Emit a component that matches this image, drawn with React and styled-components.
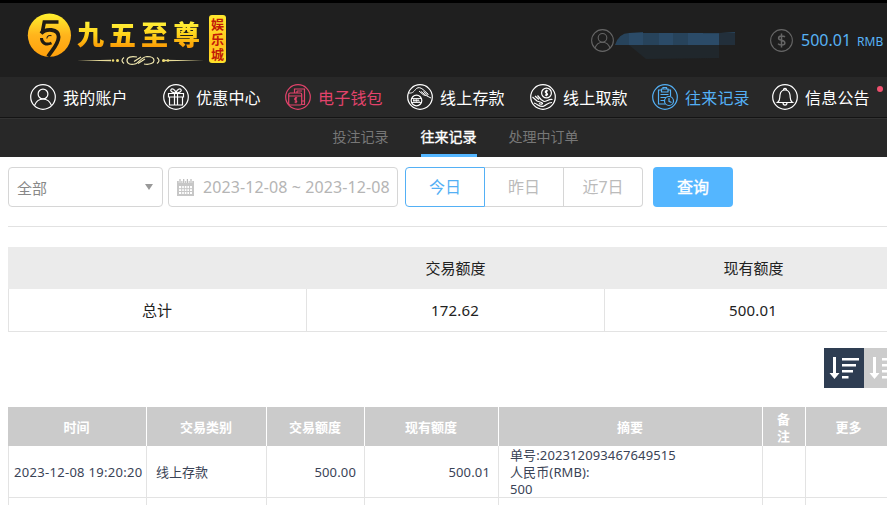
import React from 'react';
import styled, { createGlobalStyle, css } from 'styled-components';

const GlobalStyle = createGlobalStyle`
    * { box-sizing: border-box; }
    body {
        margin: 0;
        overflow: hidden;
        background: #fff;
        font-family: "Noto Sans", "Noto Sans CJK SC", sans-serif;
    }
`

const Page = styled.div`
    width: 887px;
    height: 505px;
    overflow: hidden;
`

const Header = styled.header`
    display: flex;
    align-items: flex-start;
    height: 77px;
    border-top: 3px solid #000;
    background: #1f1f1f;
`

const Logo = styled.div`
    display: flex;
    align-items: flex-start;
    width: 591px;
    padding: 10px 0 0 27px;
`

const LogoText = styled.div`
    display: flex;
    flex-direction: column;
    width: 127px;
    margin: 3px 0 0 5px;
`

const LogoName = styled.div`
    height: 38px;
    font: 900 27px/35px "Noto Sans CJK SC", sans-serif;
    letter-spacing: 5px;
    white-space: nowrap;
    color: transparent;
    background: linear-gradient(#fff23a 15%, #ffd21a 50%, #f98c00 90%);
    background-clip: text;
`

const LogoTag = styled.div`
    display: flex;
    flex-direction: column;
    align-items: center;
    justify-content: center;
    width: 17px;
    height: 48px;
    margin: 2px 0 0 5px;
    border-radius: 3px;
    background: linear-gradient(#ffe92e, #ffc21c 60%, #ffe22a);
    color: #c21a08;
    font: 700 13px/15px "Liberation Sans", "Noto Sans CJK SC", sans-serif;

    span { height: 15px; }
`

const Account = styled.div`
    display: flex;
    align-items: center;
    width: 179px;
    height: 24px;
    margin-top: 25px;
`

const Balance = styled.div`
    display: flex;
    align-items: center;
    height: 24px;
    margin-top: 25px;
    color: #57b2f5;
    font-size: 16px;
    white-space: nowrap;

    span { margin-left: 8px; }
    small { margin: 2px 0 0 6px; font-size: 12px; }
`

const Nav = styled.nav`
    display: grid;
    grid-template-columns: 133px 122px 122px 123px 122px 120px 115px;
    align-items: center;
    height: 41px;
    padding-left: 30px;
    background: #282828;
    border-bottom: 1px solid #141414;
`

const NavItem = styled.a`
    position: relative;
    display: flex;
    align-items: center;
    gap: 7px;
    color: ${p => p.$color || '#fff'};
    font: 400 16px/24px "Noto Sans CJK SC", sans-serif;
    letter-spacing: 0.2px;
    white-space: nowrap;

    svg { margin-top: -1px; flex: none; }
`

const Dot = styled.i`
    position: absolute;
    left: 105px;
    top: 1px;
    width: 6px;
    height: 6px;
    border-radius: 50%;
    background: #f0506e;
`

const SubNav = styled.div`
    display: flex;
    gap: 32px;
    height: 39px;
    padding-left: 332.5px;
    background: #282828;
    border-top: 1px solid #333;
`

const SubItem = styled.a`
    height: 38px;
    color: #777;
    font: 400 14px/34px "Noto Sans CJK SC", sans-serif;
    ${p => p.$active && css`
        color: #fff;
        -webkit-text-stroke: 0.35px;
        border-bottom: 3px solid #54b6ff;
    `}
`

const Filters = styled.div`
    display: flex;
    align-items: center;
    height: 60px;
    margin-left: 8px;
`

const Field = styled.div`
    display: flex;
    align-items: center;
    width: ${p => p.$width}px;
    height: 40px;
    margin-right: ${p => p.$gap}px;
    padding: 0 0 0 8px;
    border: 1px solid #d6d6d6;
    border-radius: 4px;
    color: ${p => p.$color};
    font-size: 15px;
    white-space: nowrap;

    svg { flex: none; }
`

const Caret = styled.i`
    margin: 0 9px 0 auto;
    border: 4px solid transparent;
    border-top: 6px solid #999;
    border-bottom: 0;
`

const DateText = styled.span`
    margin-left: 9px;
    font-size: 16px;
    letter-spacing: 0.1px;
`

const Days = styled.div`
    display: flex;
    margin-right: 10px;
`

const Day = styled.button`
    width: ${p => p.$width}px;
    height: 40px;
    padding: 0 0 2px;
    border: 1px solid ${p => p.$active ? '#54b0f5' : '#d6d6d6'};
    border-left-width: ${p => p.$active ? 1 : 0}px;
    background: #fff;
    color: ${p => p.$active ? '#54b0f5' : '#bbb'};
    font: 400 16px "Noto Sans", "Noto Sans CJK SC", sans-serif;

    &:first-child { border-radius: 4px 0 0 4px; }
    &:last-child { border-radius: 0 4px 4px 0; }
`

const Search = styled.button`
    width: 80px;
    height: 40px;
    padding: 0 0 2px;
    border: 0;
    border-radius: 4px;
    background: #54b6ff;
    color: #fff;
    font: 400 16px "Noto Sans CJK SC", sans-serif;
    -webkit-text-stroke: 0.4px;
`

const Divider = styled.hr`
    height: 1px;
    margin: 9px 0 20px 8px;
    border: 0;
    background: #e2e2e2;
`

const Summary = styled.div`
    display: grid;
    grid-template-columns: 299px 298px 298px;
    width: 895px;
    margin-left: 8px;
`

const SummaryCell = styled.div`
    height: ${p => p.$head ? 42 : 43}px;
    padding: 1px 1px 0 0;
    background: ${p => p.$head ? '#ebebeb' : '#fff'};
    border: 0 solid #e3e3e3;
    border-width: ${p => p.$head ? '0' : '0 1px 1px 0'};
    color: #222;
    font-size: 15px;
    line-height: 41px;
    letter-spacing: ${p => p.$num ? 0.15 : 0}px;
    text-align: center;
    ${p => p.$first && css`border-left-width: 1px;`}
`

const Sorting = styled.div`
    display: flex;
    margin: 16px 0 19px 824px;
`

const SortButton = styled.div`
    flex: none;
    width: 40px;
    height: 40px;
    background: ${p => p.$active ? '#2e3d52' : '#ccc'};
`

const Table = styled.table`
    width: 885px;
    margin-left: 8px;
    border-collapse: separate;
    border-spacing: 0;
    table-layout: fixed;
    font-size: 13px;
    line-height: 17px;
`

const Th = styled.th`
    height: 39px;
    padding: 0 13px 0 12px;
    background: #cbcbcb;
    border-right: 1px solid #fff;
    color: #fff;
    font-family: "Noto Sans CJK SC", sans-serif;
    font-weight: 700;
`

const Td = styled.td`
    height: ${p => p.$height || 52}px;
    padding: ${p => p.$pad || '2px 8px 0 9px'};
    border-right: 1px solid #e3e3e3;
    border-bottom: 1px solid #e3e3e3;
    color: #3a4356;
    letter-spacing: ${p => p.$spacing || 0}px;
    text-align: ${p => p.$align || 'left'};
    white-space: nowrap;

    &:first-child { border-left: 1px solid #e3e3e3; }
`

const Memo = styled.div`
    margin-bottom: -1px;
`

const Emblem = () => (
    <svg width="45" height="45" viewBox="0 0 45 45">
        <defs>
            <linearGradient id="gold" x1="0" y1="0" x2="0" y2="1">
                <stop offset="0" stopColor="#fff12e" />
                <stop offset=".5" stopColor="#ffb41c" />
                <stop offset="1" stopColor="#ffa00c" />
            </linearGradient>
        </defs>
        <circle cx="22.4" cy="22.2" r="21.6" fill="url(#gold)" />
        <g fill="none" stroke="#201c14">
            <path d="M31.500 9H17.3L15.200 20" strokeWidth="3.6" />
            <path d="M14 20.500C18.500 15.500 31.500 15 31.600 24C31.500 31 26 36 21 43.500" strokeWidth="3.8" />
            <path d="M14.500 25C14.500 30 19 32.500 24.500 30" strokeWidth="3" />
            <path d="M19.800 25.500C20.200 22.800 22.500 22 24.500 22.800" strokeWidth="1.1" />
        </g>
    </svg>
)

const Flourish = () => (
    <svg width="127" height="13" viewBox="0 0 127 13">
        <path d="M0 6.5L34 5.7V7.3ZM127 6.5L87 5.7V7.3Z" fill="#e8dc9a" />
        <g fill="none" stroke="#efe6ae" strokeWidth="1.2">
            <path d="M60 3C54 2 50 3 50 6.500S54 11 58 10C62 9 64 3 70 2.500C75 2.500 77 4 77 6.500S73 11 67 10" />
            <path d="M57 7.500L64 3M61 9.500L68 5M47 3.500Q43 6.500 47 9.500M80 3.500Q84 6.500 80 9.500" />
        </g>
        <g fill="#f0dd72">
            <circle cx="36" cy="6.500" r="1.200" /><circle cx="40.500" cy="6.500" r="1.500" />
            <circle cx="86.500" cy="6.500" r="1.500" /><circle cx="91" cy="6.500" r="1.200" />
        </g>
    </svg>
)

// Inner drawings of the round icons, all on a 26x26 grid
const shapes = {
    user: (
        <>
            <circle cx="13" cy="10" r="4.900" />
            <path d="M4.500 21.500C6 17.500 9 15 13 15S20 17.500 21.500 21.500" />
        </>
    ),
    gift: (
        <path d="M5.500 9.500H20.500V13H5.500ZM6.500 13V21H19.500V13M11.500 9.500V21M14.500 9.500V21M13 9C9 9 7 7 8 5.500S12 5 13 9C14 5 17 4 18 5.500S17 9 13 9" />
    ),
    wallet: (
        <>
            <path d="M9.500 9V5H19.500V20.500H17M12 7H17M12 9V7" />
            <rect x="3.700" y="9" width="13" height="12" rx="1.500" />
            <path d="M3.700 12H16.700M19 17H16.700M12.200 13.800C10 13 8.800 15.500 10.500 16.200S12.500 18.500 9.500 18M11 13V19.200" />
        </>
    ),
    deposit: (
        <>
            <circle cx="9.500" cy="16.500" r="5.300" />
            <path d="M5 14.500H14M5 18.500H14M6.500 17.500V15.500L8 17.500V15.500L9.500 17.500V15.500L11 17.500V15.500L12.500 17.500" strokeWidth="0.9" />
            <path d="M2 9C6 9.500 7 7 9.500 4.500C11.500 3 13.500 3.500 16 5.500L21.500 10.500M12 7L16 10.500C17 11.500 19 11 20 12L24 14M14 7.500L18.500 11M16.500 7.500L21 11.500" strokeWidth="1" />
        </>
    ),
    withdraw: (
        <>
            <circle cx="16.500" cy="9" r="4.900" />
            <path d="M18 7C15.500 6 14.300 8.300 16.300 9S18 12 15 10.900M16.500 5.700V12.200" />
            <path d="M2.500 13L7 17L11.500 18.500C14 19.500 11.500 21 9 19.500M5 12L9 15.500M7.500 11.500L11 15.500L14 17.500C17 17.500 19 14.500 22.500 15.500M4 19C8 20 10 24 14 22C17 20.500 18 18.500 22 18.500" />
        </>
    ),
    record: (
        <>
            <path d="M9 6H6.500V20H13M16.500 6H18.500V12M9.500 5H16V8H9.500ZM11 5V3.500H14.500V5M8.500 10.500H16.500M8.500 13.500H14M8.500 16.500H12.500" />
            <circle cx="17" cy="17" r="4.500" />
            <path d="M17 14V17.300L19.500 18.500" />
        </>
    ),
    bell: (
        <path d="M5.500 18.500C8.500 16.500 7.500 14 8 11C8.500 7.500 10.500 6 13 6S17.500 7.500 18 11C18.500 14 17.500 16.500 20.500 18.500ZM11 18.500C11 22 15 22 15 18.500M11.500 6C11.500 3.800 14.500 3.800 14.500 6" />
    ),
    dollar: (
        <path d="M16.800 9.200C15.800 7.500 9.700 7.400 9.700 10.400C9.700 13.500 16.800 12.100 16.800 15.700C16.800 18.800 10.200 18.500 9.200 16.500M13 5V21" strokeWidth="1.700" />
    ),
}

const RoundIcon = ({ name, size = 26, color = 'currentColor' }) => (
    <svg width={size} height={size} viewBox="0 0 26 26" fill="none" stroke={color} strokeWidth="1.2">
        <circle cx="13" cy="13" r="12.3" />
        {shapes[name]}
    </svg>
)

const HiddenName = () => (
    <svg width="121" height="42" viewBox="-1 -11 121 42">
        <path d="M0 15Q4 3 14 3L28 2V3H105L120 2V15Z" fill="#27435b" />
        <path d="M14 3H28V15H14ZM44 3H58V15H44ZM73 3H88V4H104V15H73Z" fill="#2b4b68" />
        <path d="M14 15H104V28L31 29Z" fill="#20272c" />
        <path d="M104 3H120V15H104Z" fill="#222f3b" />
    </svg>
)

const CalendarIcon = () => (
    <svg width="17" height="17" viewBox="0 0 17 17">
        <path d="M0 2H17V17H0Z" fill="#c7c7c7" />
        <path d="M2 7H15V15H2Z" fill="#fff" />
        <path d="M3 0V4M6.700 0V4M10.400 0V4M14 0V4" stroke="#fff" strokeWidth="2.400" />
        <path d="M3 0V4M6.700 0V4M10.400 0V4M14 0V4" stroke="#bbb" strokeWidth="1.200" />
        <path d="M4.700 7V15M7.300 7V15M9.900 7V15M12.500 7V15M2 9.700H15M2 12.500H15" stroke="#c7c7c7" />
    </svg>
)

const SortIcon = () => (
    <svg width="40" height="40" viewBox="0 0 40 40" fill="#fff">
        <path d="M9 9H12V25H15.500L10.500 31L5.500 25H9ZM18 10H35V12.500H18ZM18 16H32V18.500H18ZM18 22H29V24.500H18ZM18 28H24.500V30.500H18Z" />
    </svg>
)

const navItems = [
    { icon: 'user', label: '我的账户' },
    { icon: 'gift', label: '优惠中心' },
    { icon: 'wallet', label: '电子钱包', color: '#e2436b' },
    { icon: 'deposit', label: '线上存款' },
    { icon: 'withdraw', label: '线上取款' },
    { icon: 'record', label: '往来记录', color: '#54b0f5' },
    { icon: 'bell', label: '信息公告', dot: true },
]

const columns = [
    ['时间', 139],
    ['交易类别', 120],
    ['交易额度', 98],
    ['现有额度', 134],
    ['摘要', 264],
    ['备注', 43],
    ['更多', 87],
]

const App = () => (
    <Page>
        <GlobalStyle />
        <Header>
            <Logo>
                <Emblem />
                <LogoText>
                    <LogoName>九五至尊</LogoName>
                    <Flourish />
                </LogoText>
                <LogoTag>
                    <span>娱</span>
                    <span>乐</span>
                    <span>城</span>
                </LogoTag>
            </Logo>
            <Account>
                <RoundIcon name="user" size={23} color="#666" />
                <HiddenName />
            </Account>
            <Balance>
                <RoundIcon name="dollar" size={23} color="#666" />
                <span>500.01</span>
                <small>RMB</small>
            </Balance>
        </Header>
        <Nav>
            {navItems.map(item => (
                <NavItem key={item.label} $color={item.color}>
                    <RoundIcon name={item.icon} />
                    <span>{item.label}</span>
                    {item.dot && <Dot />}
                </NavItem>
            ))}
        </Nav>
        <SubNav>
            <SubItem>投注记录</SubItem>
            <SubItem $active>往来记录</SubItem>
            <SubItem>处理中订单</SubItem>
        </SubNav>
        <Filters>
            <Field $width={155} $gap={5} $color="#888">
                全部
                <Caret />
            </Field>
            <Field $width={230} $gap={7} $color="#b5b5b5">
                <CalendarIcon />
                <DateText>2023-12-08 ~ 2023-12-08</DateText>
            </Field>
            <Days>
                <Day $width={80} $active>今日</Day>
                <Day $width={79}>昨日</Day>
                <Day $width={79}>近7日</Day>
            </Days>
            <Search>查询</Search>
        </Filters>
        <Divider />
        <Summary>
            <SummaryCell $head />
            <SummaryCell $head>交易额度</SummaryCell>
            <SummaryCell $head>现有额度</SummaryCell>
            <SummaryCell $first>总计</SummaryCell>
            <SummaryCell $num>172.62</SummaryCell>
            <SummaryCell $num>500.01</SummaryCell>
        </Summary>
        <Sorting>
            <SortButton $active><SortIcon /></SortButton>
            <SortButton><SortIcon /></SortButton>
        </Sorting>
        <Table>
            <colgroup>
                {columns.map(([label, width]) => <col key={label} width={width} />)}
            </colgroup>
            <thead>
                <tr>
                    {columns.map(([label]) => <Th key={label}>{label}</Th>)}
                </tr>
            </thead>
            <tbody>
                <tr>
                    <Td $pad="2px 0 0 5px" $spacing={0.3}>2023-12-08 19:20:20</Td>
                    <Td>线上存款</Td>
                    <Td $align="right" $spacing={0.15}>500.00</Td>
                    <Td $align="right" $spacing={0.15}>500.01</Td>
                    <Td $pad="1px 11px 0" $spacing={0.12}>
                        <Memo>
                            单号:202312093467649515<br />
                            人民币(RMB):<br />
                            500
                        </Memo>
                    </Td>
                    <Td />
                    <Td />
                </tr>
                <tr>
                    {columns.map(([label]) => <Td key={label} $height={30} />)}
                </tr>
            </tbody>
        </Table>
    </Page>
)

export default App;
